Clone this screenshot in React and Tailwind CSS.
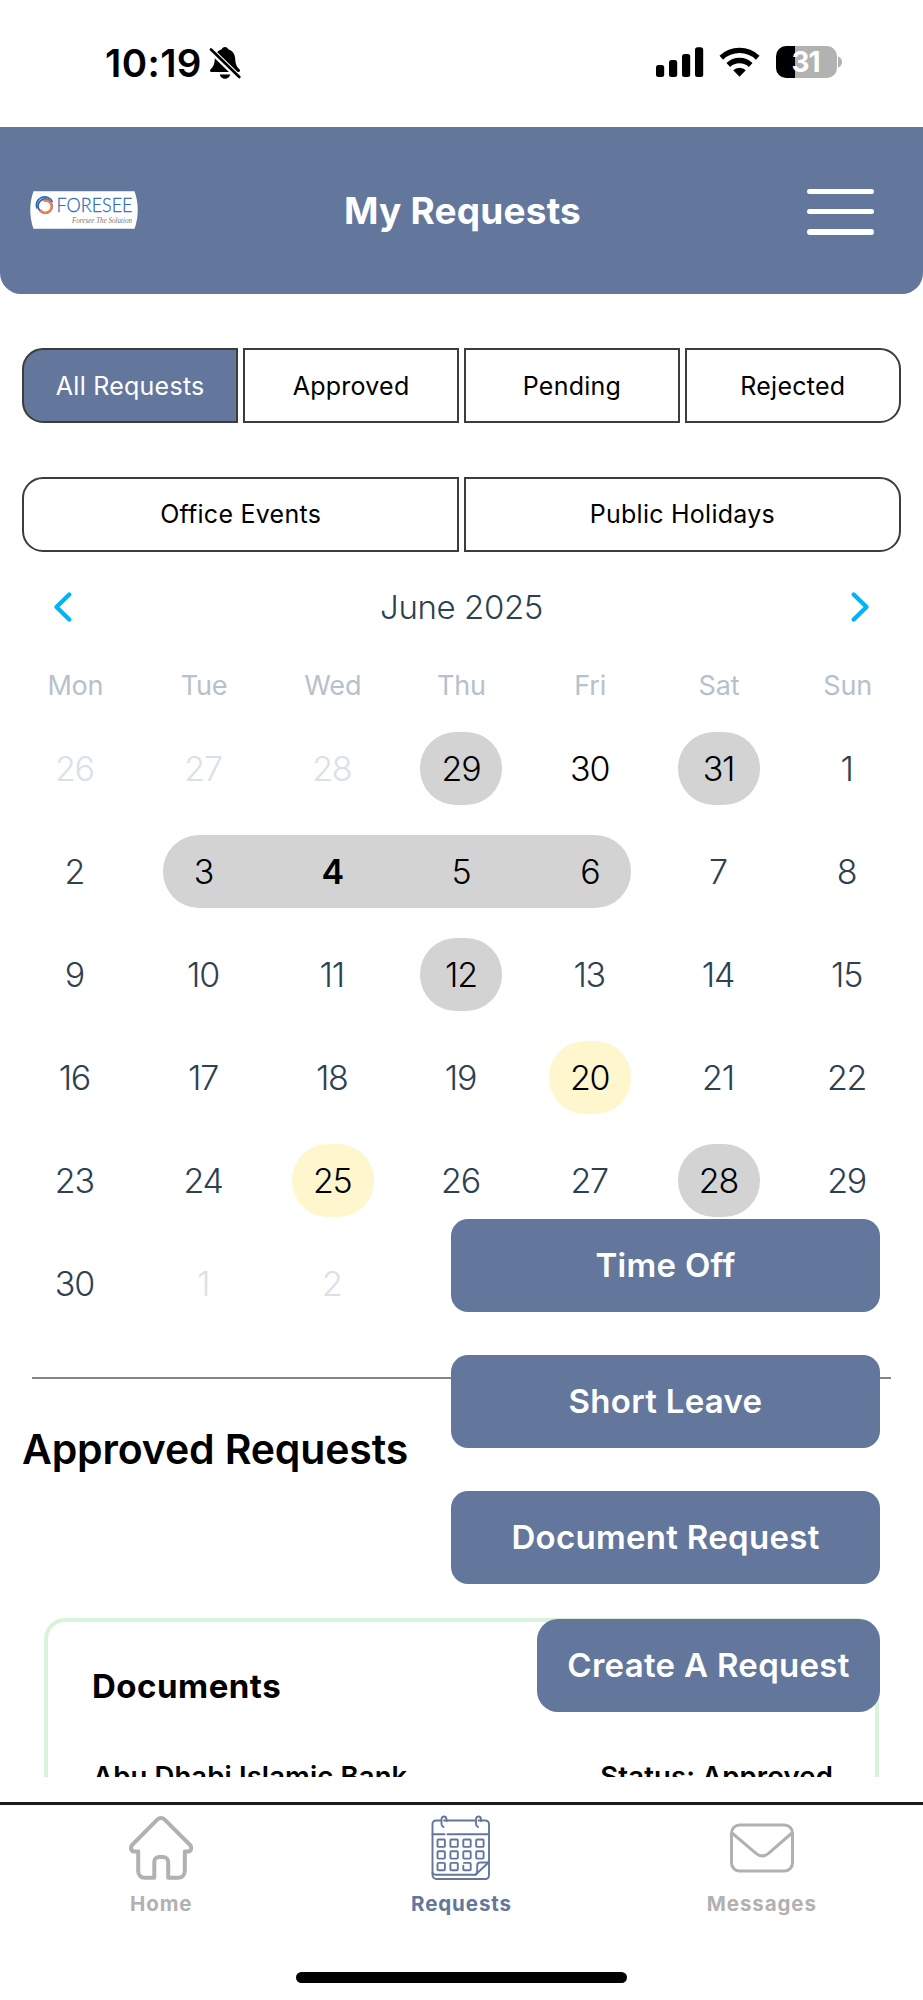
import React, { useState } from "react"

const filters = [
  { name: "All Requests", corners: "rounded-l-[21px]" },
  { name: "Approved", corners: "" },
  { name: "Pending", corners: "" },
  { name: "Rejected", corners: "rounded-r-[21px]" },
]

const eventFilters = [
  { name: "Office Events", corners: "rounded-l-[21px]" },
  { name: "Public Holidays", corners: "rounded-r-[21px]" },
]

const weekDays = ["Mon", "Tue", "Wed", "Thu", "Fri", "Sat", "Sun"]

// type: out = other month, dark = black text, gray/yellow = single pill,
// start/mid/end = parts of a range
const weeks = [
  [[26, "out"], [27, "out"], [28, "out"], [29, "gray"], [30, "dark"], [31, "gray"], [1]],
  [[2], [3, "start"], [4, "mid", true], [5, "mid"], [6, "end"], [7], [8]],
  [[9], [10], [11], [12, "gray"], [13], [14], [15]],
  [[16], [17], [18], [19], [20, "yellow"], [21], [22]],
  [[23], [24], [25, "yellow"], [26], [27], [28, "gray"], [29]],
  [[30], [1, "out"], [2, "out"]],
]

const dayStyles = {
  normal: "w-[82px] pr-[2px] text-[#2d4150]",
  out: "w-[82px] pr-[2px] text-[#d9e1e8]",
  dark: "w-[82px] pr-px text-black",
  gray: "w-[82px] pr-px text-black bg-[#d3d3d3] rounded-[36px]",
  yellow: "w-[82px] pr-px text-black bg-[#fef6cd] rounded-[36px]",
  start: "w-[105px] ml-auto pr-[25px] text-black bg-[#d3d3d3] rounded-l-[36px]",
  mid: "w-full pr-px text-black bg-[#d3d3d3]",
  end: "w-[105px] mr-auto pl-[23px] text-black bg-[#d3d3d3] rounded-r-[36px]",
}

const StatusBar = () => {
  return (
    <div className="flex h-[126.500px] shrink-0 items-start justify-between pl-[105px] pr-[80px] pt-[46px]">
      <div className="flex items-center">
        <span className="w-[98px] whitespace-nowrap text-[38.500px] font-semibold leading-[34px] tracking-[0.4px]">10:19</span>
        <svg className="ml-[6px]" width="32" height="34" viewBox="0 0 32 34">
          <path d="M16 1c1.600 0 3 1 3.300 2.300C23.800 4.700 26 8.500 26.200 13c.2 5 1.500 8 4.400 10.500.8 1.100.3 2.600-1.100 2.600H2.500c-1.400 0-1.900-1.500-1.100-2.600C4.300 21 5.600 18 5.800 13 6 8.500 8.200 4.700 12.700 3.300 13 2 14.400 1 16 1z" />
          <path d="M10.800 28.600h10.400c-.4 2.700-2.600 4.200-5.200 4.200s-4.800-1.500-5.200-4.200z" />
          <path d="M1 3.500 30.500 32" stroke="#fff" strokeWidth="6" />
          <path d="M2 3.500 30.300 31" stroke="#000" strokeWidth="2.600" strokeLinecap="round" />
        </svg>
      </div>
      <div className="flex items-center">
        <svg width="48" height="32" viewBox="0 0 48 32">
          <rect x="0" y="19" width="8.200" height="12" rx="2.500" />
          <rect x="13" y="14" width="8.200" height="17" rx="2.500" />
          <rect x="26" y="8" width="8.200" height="23" rx="2.500" />
          <rect x="39" y="1.300" width="8.200" height="29.700" rx="2.500" />
        </svg>
        <svg className="ml-[15px]" width="42" height="32" viewBox="0 0 42 32">
          <path d="M2.300 11.700a26.500 26.500 0 0 1 36.400 0" fill="none" stroke="#000" strokeWidth="5.300" />
          <path d="M9.300 19a16.200 16.200 0 0 1 22.400 0" fill="none" stroke="#000" strokeWidth="5.300" />
          <path d="M20.500 30.800l-6.300-6.500a9 9 0 0 1 12.600 0z" />
        </svg>
        <div className="ml-[15px] flex h-8 w-[61px] items-center justify-center rounded-[10px] bg-linear-to-r from-black from-31% to-[#b2b2b2] to-31%">
          <span className="pr-px text-[28px] font-bold leading-none tracking-[-1px] text-white">31</span>
        </div>
        <svg className="ml-[1.500px]" width="5" height="12" viewBox="0 0 5 12">
          <path d="M0 .5c2.500.8 4 2.800 4 5.500s-1.500 4.700-4 5.500z" fill="#b2b2b2" />
        </svg>
      </div>
    </div>
  );
}

const Logo = () => {
  return (
    <svg width="108" height="38" viewBox="0 0 108 38">
      <path d="M3.500 .3h101c4.300 12 4.300 25.400 0 37.400H3.500C-.8 25.700-.8 12.300 3.500 .3z" fill="#fff" />
      <circle cx="15" cy="15" r="7" fill="none" stroke="#2f68b2" strokeWidth="1.800" />
      <path d="M7 17.500A8.400 8.400 0 0 1 22.500 11" fill="none" stroke="#2f68b2" strokeWidth="1.800" />
      <path d="M13.500 9.800a6.200 6.200 0 1 1-3.500 8.800" fill="none" stroke="#f47b4b" strokeWidth="2.400" />
      <text x="26.500" y="21.400" fontSize="20" textLength="76" lengthAdjust="spacingAndGlyphs" fill="#2f6cb8" stroke="#2f6cb8" strokeWidth="0.3" className="font-['Lato'] font-light leading-none">FORESEE</text>
      <text x="42" y="32" fontSize="8" textLength="60" lengthAdjust="spacingAndGlyphs" fill="#777" className="font-['Liberation_Serif'] italic leading-none">Foresee The Solution</text>
    </svg>
  );
}

const FilterButton = ({ item, selected, onClick }) => {
  return (
    <button onClick={onClick}
      className={`flex-1 h-[75px] border-2 border-[#3c3d38] pt-[2px] text-[25px] tracking-[0.25px] ${item.corners} ${selected ? "bg-[#63779d] text-white" : "bg-white text-black"}`}>
      {item.name}
    </button>
  );
}

const Calendar = () => {
  return (
    <div className="px-[11px]">
      <div className="flex h-[110px] items-center justify-between pl-[42px] pr-[42px]">
        <svg width="20" height="32" viewBox="0 0 20 32" fill="none" stroke="#00b5f5" strokeWidth="4.400" strokeLinecap="round" strokeLinejoin="round">
          <path d="M16.300 3.500 3.500 16l12.800 12.500" />
        </svg>
        <span className="pt-px text-[33px] font-light leading-none tracking-[-0.4px] text-[#2d4150]">June 2025</span>
        <svg width="20" height="32" viewBox="0 0 20 32" fill="none" stroke="#00b5f5" strokeWidth="4.400" strokeLinecap="round" strokeLinejoin="round">
          <path d="M3.700 3.500 16.500 16 3.700 28.500" />
        </svg>
      </div>
      <div className="grid h-[49px] grid-cols-7 items-center text-center text-[27px] tracking-[-0.2px] text-[#b6c1cd]">
        {weekDays.map((day) => <span key={day}>{day}</span>)}
      </div>
      <div className="pt-[6px]">
        {weeks.map((week, i) => (
          <div key={i} className="grid h-[103px] grid-cols-7 items-center">
            {week.map(([day, type, today], j) => (
              <div key={j} className="flex justify-center">
                <div className={`flex h-[73px] items-center justify-center text-[34px] tracking-[-1.200px] ${today ? "font-semibold" : "font-light"} ${dayStyles[type || "normal"]}`}>
                  {day}
                </div>
              </div>
            ))}
          </div>
        ))}
      </div>
    </div>
  );
}

const HomeIcon = () => {
  return (
    <svg width="64" height="64" viewBox="0 0 64 64" fill="none" stroke="#b1b1b1" strokeWidth="4" strokeLinejoin="round">
      <path d="M28.300 3.600 3.600 28.500c-3.200 3.200-1.500 7 2.200 7H9.200V55c0 4 2.500 6.800 6.500 6.800h9.600V46c0-3 1.800-5 4.800-5h3.800c3 0 5.300 2 5.300 5v15.800h10c4 0 6.600-2.800 6.600-6.800V35.500h2.600c3.700 0 5.400-3.800 2.200-7L35.700 3.600c-2.200-2.100-5.200-2.100-7.400 0z" />
    </svg>
  );
}

const CalendarIcon = () => {
  const boxes = []
  for (let row = 0; row < 3; row++) {
    for (let col = 0; col < 4; col++) {
      boxes.push([6.500 + col * 12.900, 24.500 + row * 11.700])
    }
  }
  return (
    <svg width="60" height="66" viewBox="0 0 60 66" fill="none" stroke="#63779d" strokeWidth="1.900" strokeLinecap="round">
      <path d="M9.500 5.500H5a3.500 3.500 0 0 0-3.500 3.500v51a4 4 0 0 0 4 4h49a3.500 3.500 0 0 0 3.500-3.500V9a3.500 3.500 0 0 0-3.500-3.500h-7M13 5.500h31" />
      <path d="M1.500 19.200h12M16.500 19.200H58M1.500 57.500c.5 1.500 1.500 2.200 3.500 2.200h39.500L58 47" />
      <path d="M44.500 59.700c1.500-1 1.700-2.200 1.700-4v-5c0-2 1.200-3.200 3.200-3.200H58" />
      <path d="M10.500 9V4.500c0-4 5-4 5 0V6M10.500 9c0 1.800.8 2.600 2 3" />
      <path d="M45 9V4.500c0-4 5-4 5 0V6M45 9c0 1.800.8 2.600 2 3" />
      {boxes.map(([x, y], i) => (
        <rect key={i} x={x} y={y} width="7.400" height="7.400" rx="1"
          className={i === 11 ? "hidden" : ""} strokeDasharray={i === 10 ? "24 3" : undefined} />
      ))}
    </svg>
  );
}

const MailIcon = () => {
  return (
    <svg width="64" height="64" viewBox="0 0 64 64" fill="none" stroke="#b1b1b1" strokeWidth="3">
      <rect x="1.500" y="9" width="61" height="46" rx="8" />
      <path d="M2 17 26 37.300c4 3.300 8.500 3.300 12.500 0L62 17" />
    </svg>
  );
}

const TabItem = ({ icon, name, active }) => {
  return (
    <button className="flex flex-1 flex-col items-center">
      <div className="flex h-[66px] items-center">{icon}</div>
      <span className={`mt-[9px] text-[20.500px] font-bold leading-[28px] tracking-[0.9px] ${active ? "text-[#63779d]" : "text-[#b1b1b1]"}`}>{name}</span>
    </button>
  );
}

const App = () => {
  const [filter, setFilter] = useState("All Requests");
  const menuOptions = ["Time Off", "Short Leave", "Document Request"]

  return (
    <div className="relative flex h-[2000px] w-[923px] flex-col overflow-hidden bg-white font-['Inter',sans-serif] text-black">
      <StatusBar />
      <header className="grid h-[167.500px] shrink-0 grid-cols-3 items-center rounded-b-[21px] bg-[#63779d] pl-[30px] pr-[49px]">
        <Logo />
        <h1 className="justify-self-center whitespace-nowrap pl-[21px] text-[37px] font-bold tracking-[0.2px] text-white">My Requests</h1>
        <div className="flex flex-col gap-[15px] justify-self-end pt-[3px]">
          <span className="h-[5.400px] w-[67px] rounded-full bg-white"></span>
          <span className="h-[5.400px] w-[67px] rounded-full bg-white"></span>
          <span className="h-[5.400px] w-[67px] rounded-full bg-white"></span>
        </div>
      </header>

      <main className="h-[1483px] shrink-0 overflow-hidden">
        <div className="mt-[54px] flex gap-[4.500px] px-[22px]">
          {filters.map((item) => (
            <FilterButton key={item.name} item={item} selected={filter === item.name} onClick={() => setFilter(item.name)} />
          ))}
        </div>
        <div className="mt-[53.500px] flex gap-[4.500px] px-[22px]">
          {eventFilters.map((item) => (
            <FilterButton key={item.name} item={item} selected={filter === item.name} onClick={() => setFilter(item.name)} />
          ))}
        </div>
        <Calendar />
        <hr className="mx-[32px] mt-[42.500px] border-t-2 border-[#868686]" />
        <h2 className="ml-[22px] mt-[44px] text-[41px] font-semibold leading-[52px] tracking-[-0.150px]">Approved Requests</h2>
        <div className="mx-[44px] mt-[143px] h-[400px] rounded-[21px] border-4 border-[#d9f3da] px-[44px] pt-[42px]">
          <h3 className="text-[33px] font-bold leading-[44px] tracking-[0.5px]">Documents</h3>
          <div className="-mr-[2px] mt-[50px] flex justify-between pl-px text-[27.500px] font-semibold leading-[36px] tracking-[0.120px]">
            <span>Abu Dhabi Islamic Bank</span>
            <span>Status: Approved</span>
          </div>
        </div>
      </main>

      <nav className="mt-[25px] flex h-[198px] shrink-0 flex-col border-t-[3px] border-[#1c1c1c]">
        <div className="flex px-[11px] pt-[10px]">
          <TabItem icon={<HomeIcon />} name="Home" />
          <TabItem icon={<CalendarIcon />} name="Requests" active />
          <TabItem icon={<MailIcon />} name="Messages" />
        </div>
        <div className="mx-auto mt-[54px] h-[11px] w-[331px] rounded-full bg-black"></div>
      </nav>

      {/* floating create menu */}
      <div className="absolute right-[43px] top-[1219px] flex w-[429px] flex-col items-end text-[33px] font-semibold tracking-[0.300px] text-white">
        {menuOptions.map((option) => (
          <button key={option} className="mb-[43px] h-[93px] w-full rounded-[17px] bg-[#63779d] pt-px">{option}</button>
        ))}
        <button className="-mt-[8px] h-[93px] w-[343px] rounded-[21px] bg-[#63779d] pt-px whitespace-nowrap">Create A Request</button>
      </div>
    </div>
  );
}

export default App;
